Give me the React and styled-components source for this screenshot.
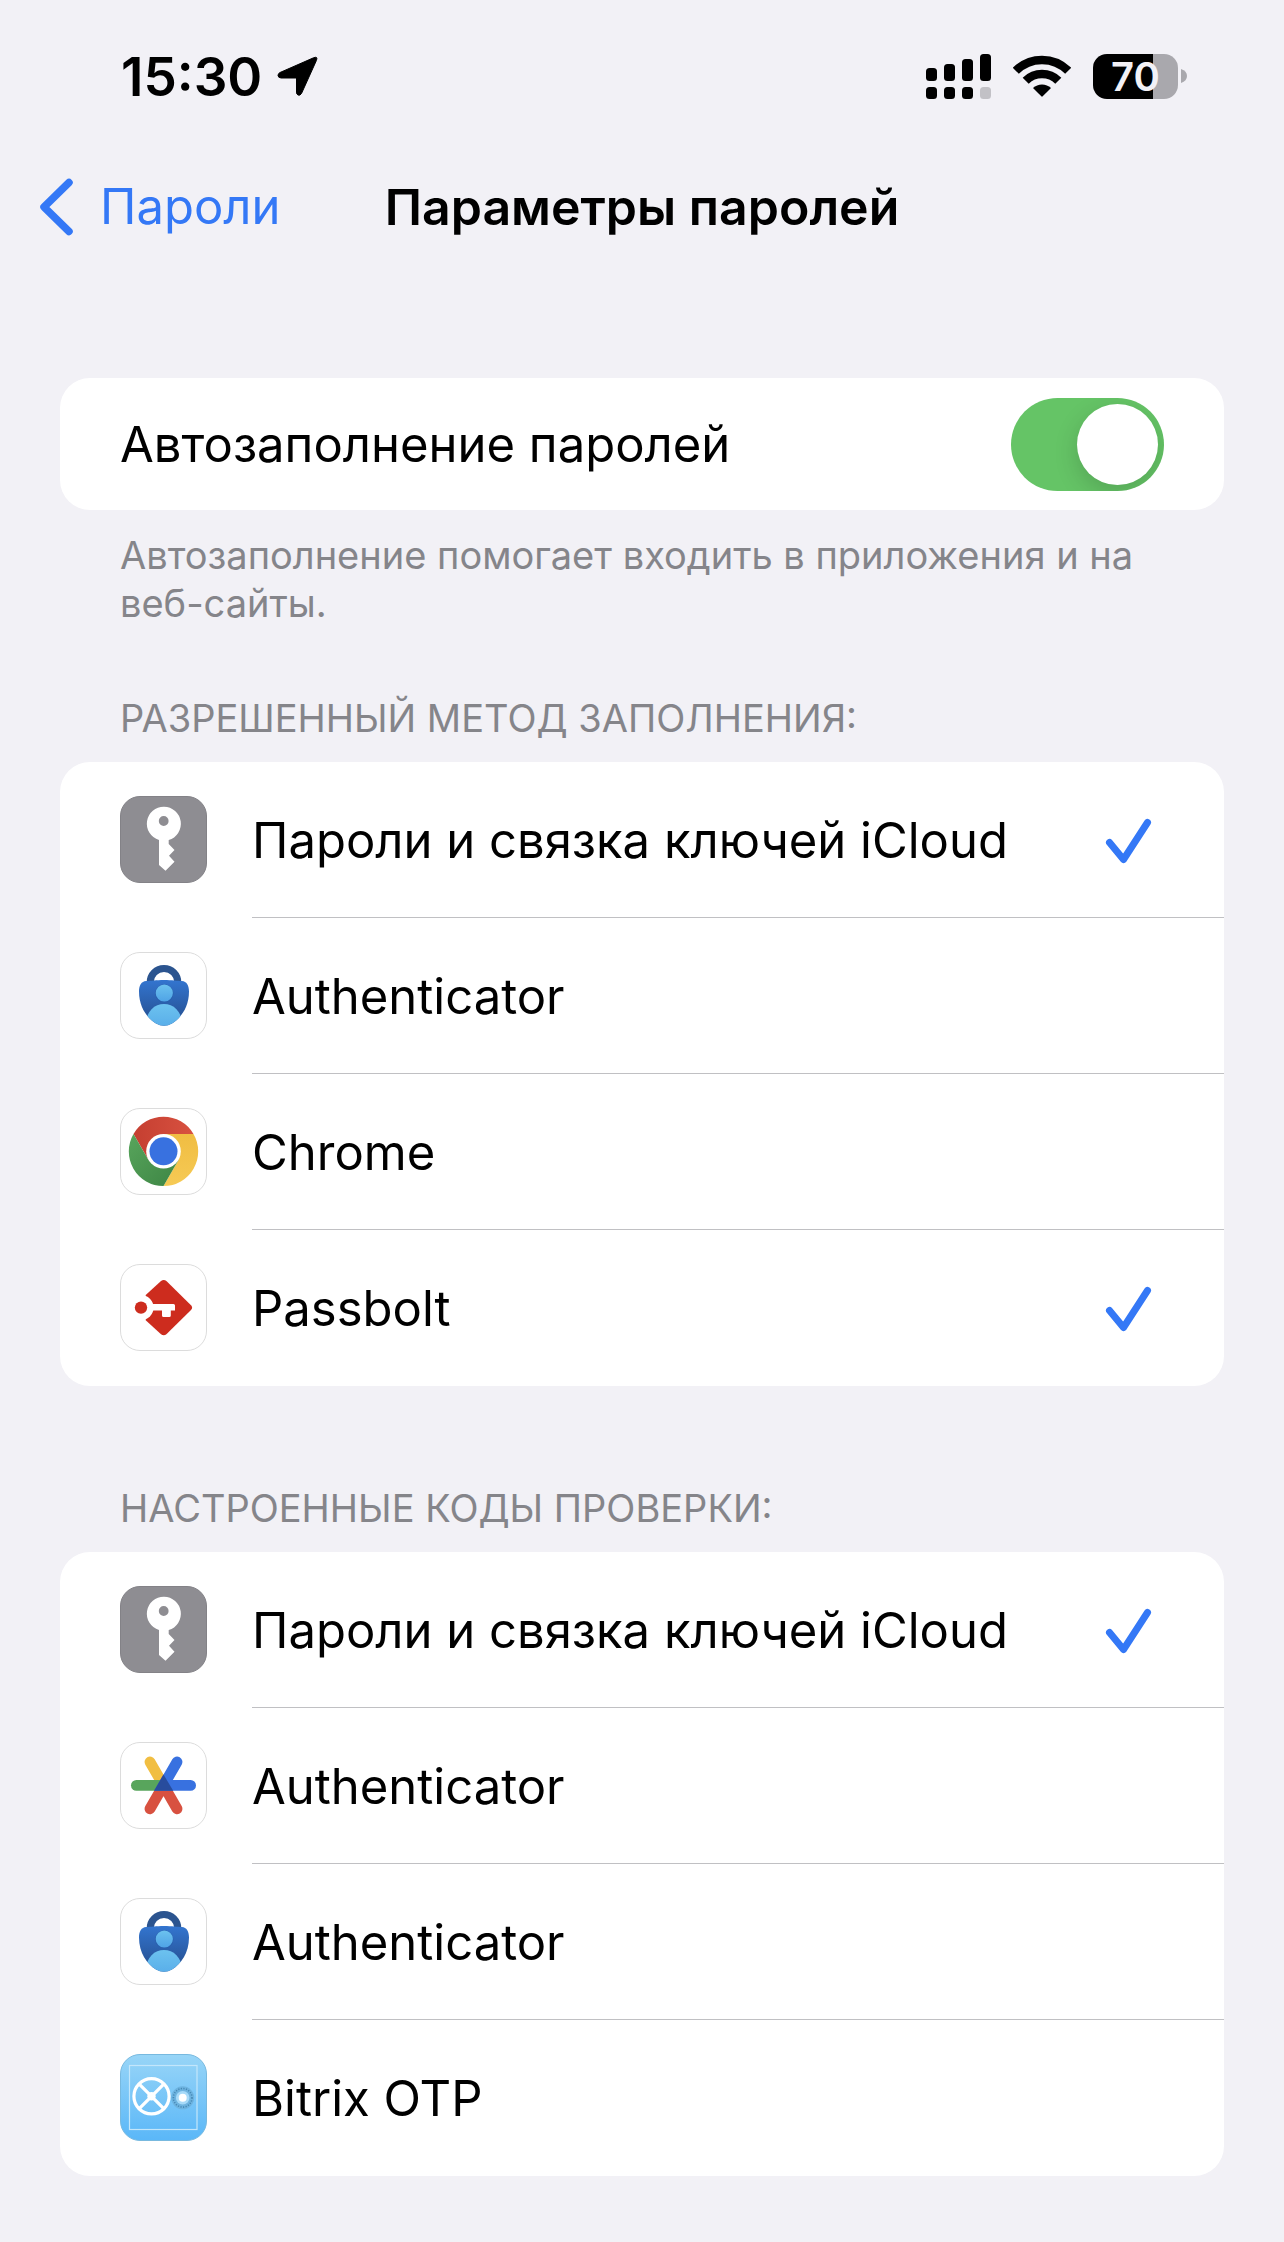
import React, { useState } from "react";
import styled, { createGlobalStyle } from "styled-components";

const GlobalStyle = createGlobalStyle`
  *, *::before, *::after { box-sizing: border-box; }
  body {
    margin: 0;
    background: #f2f1f6;
    color: #000;
    font-family: Inter, "Liberation Sans", sans-serif;
    font-size: 49px;
    line-height: 60px;
  }
`;

const Screen = styled.div`
  padding-bottom: 64px;
`;

const StatusBar = styled.header`
  display: flex;
  align-items: center;
  justify-content: space-between;
  height: 152px;
  padding: 0 97px 0 121px;
`;

const StatusGroup = styled.div`
  display: flex;
  align-items: center;
  gap: ${(p) => p.$gap}px;
`;

const Time = styled.time`
  padding-top: 2px;
  font-size: 53px;
  font-weight: 600;
`;

const Battery = styled.div`
  display: flex;
  align-items: center;
  gap: 3px;
`;

const BatteryBody = styled.div`
  display: grid;
  place-items: center;
  width: 85px;
  height: 45px;
  border-radius: 14px;
  background: linear-gradient(to right, #000 ${(p) => p.$level}%, #a9a8ad ${(p) => p.$level}%);
  color: #f2f1f6;
  font-size: 40px;
  font-weight: 600;
  line-height: 45px;
`;

const NavBar = styled.nav`
  display: grid;
  grid-template-columns: 1fr auto 1fr;
  align-items: center;
  height: 110px;
  padding: 0 40px;
`;

const BackLink = styled.a`
  display: flex;
  align-items: center;
  gap: 26px;
  color: #3478f6;
  text-decoration: none;
`;

const Title = styled.h1`
  margin: 0;
  font-size: 50px;
  font-weight: 600;
`;

const Main = styled.main`
  padding: 116px 60px 0;
`;

const Section = styled.section`
  margin-top: ${(p) => p.$space || 0}px;
`;

const Card = styled.div`
  border-radius: 30px;
  background: #fff;
  overflow: hidden;
`;

const RowText = styled.span`
  padding-top: 2px;
`;

const SwitchRow = styled.label`
  display: flex;
  align-items: center;
  justify-content: space-between;
  height: 132px;
  padding: 0 60px;
`;

const Switch = styled.input`
  appearance: none;
  display: flex;
  justify-content: ${(p) => (p.checked ? "flex-end" : "flex-start")};
  width: 153px;
  height: 93px;
  margin: 0;
  padding: 6px;
  border-radius: 47px;
  background: ${(p) => (p.checked ? "#65c466" : "#e9e9ea")};
  overflow: hidden;

  &::before {
    content: "";
    width: 81px;
    height: 81px;
    border-radius: 50%;
    background: #fff;
    box-shadow: 0 8px 24px rgba(0, 0, 0, 0.16);
  }
`;

const Note = styled.p`
  margin: 0;
  padding: 21px 60px 0;
  color: #85858a;
  font-size: 38px;
  line-height: 48px;
`;

const Heading = styled.h2`
  margin: 0;
  padding: 0 60px 20px;
  color: #85858a;
  font-size: 38px;
  font-weight: 400;
  line-height: 48px;
  text-transform: uppercase;
`;

const Row = styled.label`
  display: flex;
  align-items: flex-start;
  gap: 45px;
  height: 156px;
  padding-left: 60px;
`;

const RowBody = styled.span`
  display: flex;
  flex: 1;
  align-items: center;
  justify-content: space-between;
  height: 156px;
  padding-right: 72px;
  border-bottom: 1px solid #c0c0c3;

  ${Row}:last-child & {
    border-bottom-color: transparent;
  }
`;

const CheckCell = styled.span`
  display: grid;
  width: 48px;
  height: 48px;

  > * { grid-area: 1 / 1; }
  > svg { visibility: hidden; pointer-events: none; }
  > input:checked + svg { visibility: visible; }
`;

const CheckInput = styled.input`
  appearance: none;
  width: 48px;
  height: 48px;
  margin: 0;
`;

const IconSvg = styled.svg`
  display: block;
  flex: none;
  width: 87px;
  height: 87px;
  margin-top: 34px;
`;

function Tile({ fill = "#fff", stroke = "#dcdcdc" }) {
  return <rect x="0.5" y="0.5" width="86" height="86" rx="19.5" fill={fill} stroke={stroke} />;
}

function KeyIcon() {
  return (
    <IconSvg viewBox="0 0 87 87" aria-hidden="true">
      <Tile fill="#8e8d92" stroke="#838287" />
      <path
        fill="#fff"
        fillRule="evenodd"
        d="M44 10.7a17 17 0 0 1 4.7 33.3v4l5.8 6-5.5 5.7 5.5 6-9 9L39 69V44A17 17 0 0 1 44 10.7Zm-.3 9.4a4.9 4.9 0 1 0 0 9.8a4.9 4.9 0 0 0 0-9.8Z"
      />
    </IconSvg>
  );
}

function ShieldIcon({ id }) {
  const body =
    "M44 28C52 28 57 29 62 29C66.500 29.500 69 33 69 39.500C69 55 61 66 52 71.500Q44 76 36 71.500C27 66 19 55 19 39.500C19 33 21.500 29.500 26 29C31 29 36 28 44 28Z";
  return (
    <IconSvg viewBox="0 0 87 87" aria-hidden="true">
      <defs>
        <linearGradient id={`${id}-body`} x1="0" y1="0" x2="0" y2="1">
          <stop offset="0" stopColor="#3375cf" />
          <stop offset="0.75" stopColor="#28569c" />
        </linearGradient>
        <linearGradient id={`${id}-user`} x1="0" y1="0" x2="0" y2="1">
          <stop offset="0" stopColor="#6cc2ef" />
          <stop offset="1" stopColor="#4fa3e6" />
        </linearGradient>
        <clipPath id={`${id}-clip`}>
          <path d={body} />
        </clipPath>
      </defs>
      <Tile />
      <path d="M30.200 31V30.300a13.800 13.800 0 0 1 27.600 0V31" fill="none" stroke="#2b548f" strokeWidth="7" />
      <path d={body} fill={`url(#${id}-body)`} />
      <g clipPath={`url(#${id}-clip)`}>
        <circle cx="44.300" cy="41.500" r="9.200" fill="#2a60ad" />
        <circle cx="44.300" cy="41" r="8.600" fill={`url(#${id}-user)`} />
        <circle cx="44" cy="69.500" r="17.500" fill={`url(#${id}-user)`} />
      </g>
    </IconSvg>
  );
}

function ChromeIcon() {
  return (
    <IconSvg viewBox="0 0 87 87" aria-hidden="true">
      <defs>
        <linearGradient id="chrome-red">
          <stop offset="0" stopColor="#c53f31" />
          <stop offset="1" stopColor="#d85140" />
        </linearGradient>
        <linearGradient id="chrome-yellow" x1="0" y1="1" x2="0" y2="0">
          <stop offset="0" stopColor="#f6ca55" />
          <stop offset="1" stopColor="#f0bd42" />
        </linearGradient>
        <linearGradient id="chrome-green" x1="0" y1="0" x2="1" y2="1">
          <stop offset="0" stopColor="#58a55c" />
          <stop offset="1" stopColor="#3d8544" />
        </linearGradient>
      </defs>
      <Tile />
      <path fill="url(#chrome-red)" d="M13.500 26A34.600 34.600 0 0 1 73.500 26H43.500V43.300L28.500 52Z" />
      <path fill="url(#chrome-yellow)" d="M73.500 26A34.600 34.600 0 0 1 43.500 78L58.500 52L43.500 43.300V26Z" />
      <path fill="url(#chrome-green)" d="M43.500 78A34.600 34.600 0 0 1 13.500 26L28.500 52L43.500 43.300L58.500 52Z" />
      <circle cx="43.500" cy="43.300" r="17.300" fill="#fff" />
      <circle cx="43.500" cy="43.300" r="14" fill="#3871e0" />
    </IconSvg>
  );
}

function PassboltIcon() {
  return (
    <IconSvg viewBox="0 0 87 87" aria-hidden="true">
      <Tile />
      <path
        fill="#cd2c1e"
        d="M25.700 31L41 17Q43.700 15 46.400 17L71 41.200Q73.300 43.600 71 46L46.400 70.200Q43.700 72.300 41 70.200L25.700 56.200Z"
      />
      <circle cx="21" cy="43.600" r="12.600" fill="#fff" />
      <path fill="#fff" d="M30 40H53.500Q55 40 55 41.500V46.400H50.800V51.500Q50.800 53 49.300 53H43.500Q42 53 42 51.500V46.400H30Z" />
      <circle cx="21" cy="43.600" r="6.200" fill="#cd2c1e" />
    </IconSvg>
  );
}

function AsteriskIcon() {
  return (
    <IconSvg viewBox="0 0 87 87" aria-hidden="true">
      <Tile />
      <g fill="none" strokeWidth="10.800" strokeLinecap="round">
        <path stroke="#f1be42" d="M30 20L43.500 43.400" />
        <path stroke="#d85140" d="M30 66.800L43.500 43.400L57 66.800" />
        <path stroke="#58a55c" d="M16.400 43.400H40" />
        <path stroke="#3871e0" d="M57 20L43.500 43.400H70.600" />
      </g>
      <path fill="#284c9d" d="M43.500 32.500L53.200 48.800H34Z" />
    </IconSvg>
  );
}

function SafeIcon() {
  return (
    <IconSvg viewBox="0 0 87 87" aria-hidden="true">
      <defs>
        <linearGradient id="safe" x1="0" y1="0" x2="0" y2="1">
          <stop offset="0" stopColor="#98d5f7" />
          <stop offset="1" stopColor="#5ab7f8" />
        </linearGradient>
      </defs>
      <Tile fill="url(#safe)" stroke="#78b9df" />
      <rect x="9.500" y="11.500" width="67.500" height="64" fill="none" stroke="#c3e6fb" strokeWidth="1.200" />
      <g fill="none" stroke="#fff" strokeWidth="3.200">
        <circle cx="31.500" cy="42.300" r="17.600" />
        <path d="M19.500 30.300L43.500 54.300M43.500 30.300L19.500 54.300" />
      </g>
      <circle cx="31.500" cy="42.300" r="4.200" fill="#fff" />
      <circle cx="62.700" cy="43.800" r="11.500" fill="#6db3df" />
      <circle cx="62.700" cy="43.800" r="9.300" fill="none" stroke="#4688b5" strokeWidth="1.600" strokeDasharray="1.200 1.400" />
      <circle cx="62.700" cy="43.800" r="6.800" fill="#a6daf9" />
      <circle cx="62.700" cy="43.800" r="4" fill="#fff" />
    </IconSvg>
  );
}

function LocationArrow() {
  return (
    <svg width="42" height="42" viewBox="0 0 42 42" aria-hidden="true">
      <path
        d="M3 17.500L36.500 2.800Q41.200 1 39.400 5.500L24.500 38.500Q23 41 21 40Q19.500 39.500 19.500 37V23H4Q1 22.500 1 20.500Q1 18.500 3 17.500Z"
        stroke="#000"
        strokeLinejoin="round"
      />
    </svg>
  );
}

function SignalIcon() {
  const tops = [14, 10, 5, 0];
  return (
    <svg width="65" height="45" viewBox="0 0 65 45" aria-hidden="true">
      {tops.map((top, i) => (
        <g key={top}>
          <rect x={i * 18} y={top} width="11" height={27 - top} rx="3.500" />
          <rect x={i * 18} y="33" width="11" height="12" rx="3.500" fill={i === 3 ? "#c2c1c6" : "#000"} />
        </g>
      ))}
    </svg>
  );
}

function WifiIcon() {
  return (
    <svg width="58" height="42" viewBox="0 0 58 42" aria-hidden="true">
      <g fill="none" stroke="#000" strokeWidth="8.600">
        <path d="M2.800 15.800A37 37 0 0 1 55.200 15.800" />
        <path d="M12.700 25.700A23.200 23.200 0 0 1 45.300 25.700" />
      </g>
      <path d="M20 33A13 13 0 0 1 38 33L29.700 41.300Q29 42 28.300 41.300Z" />
    </svg>
  );
}

function Chevron() {
  return (
    <svg width="34" height="58" viewBox="0 0 34 58" aria-hidden="true">
      <path d="M29 4.500L4 29L29 53.500" fill="none" stroke="#3478f6" strokeWidth="7.500" strokeLinecap="round" strokeLinejoin="round" />
    </svg>
  );
}

function CheckMark() {
  return (
    <svg width="48" height="48" viewBox="0 0 48 48" aria-hidden="true">
      <path d="M5.500 26.500L19.500 43.500L43.500 6.500" fill="none" stroke="#3478f6" strokeWidth="7" strokeLinecap="round" strokeLinejoin="round" />
    </svg>
  );
}

const fillMethods = [
  { id: "fill-icloud", name: "Пароли и связка ключей iCloud", icon: <KeyIcon />, on: true },
  { id: "fill-ms", name: "Authenticator", icon: <ShieldIcon id="fill-shield" /> },
  { id: "fill-chrome", name: "Chrome", icon: <ChromeIcon /> },
  { id: "fill-passbolt", name: "Passbolt", icon: <PassboltIcon />, on: true },
];

const codeProviders = [
  { id: "code-icloud", name: "Пароли и связка ключей iCloud", icon: <KeyIcon />, on: true },
  { id: "code-google", name: "Authenticator", icon: <AsteriskIcon /> },
  { id: "code-ms", name: "Authenticator", icon: <ShieldIcon id="code-shield" /> },
  { id: "code-bitrix", name: "Bitrix OTP", icon: <SafeIcon /> },
];

function OptionList({ items }) {
  return (
    <Card>
      {items.map((item) => (
        <Row key={item.id} htmlFor={item.id}>
          {item.icon}
          <RowBody>
            <RowText>{item.name}</RowText>
            <CheckCell>
              <CheckInput type="checkbox" id={item.id} defaultChecked={Boolean(item.on)} />
              <CheckMark />
            </CheckCell>
          </RowBody>
        </Row>
      ))}
    </Card>
  );
}

export default function App() {
  const [autofill, setAutofill] = useState(true);
  return (
    <Screen>
      <GlobalStyle />
      <StatusBar>
        <StatusGroup $gap={15}>
          <Time>15:30</Time>
          <LocationArrow />
        </StatusGroup>
        <StatusGroup $gap={22}>
          <SignalIcon />
          <WifiIcon />
          <Battery>
            <BatteryBody $level={71}>70</BatteryBody>
            <svg width="6" height="14" viewBox="0 0 6 14" aria-hidden="true">
              <path d="M0 0Q6 2 6 7Q6 12 0 14Z" fill="#a9a8ad" />
            </svg>
          </Battery>
        </StatusGroup>
      </StatusBar>
      <NavBar>
        <BackLink href="#passwords">
          <Chevron />
          Пароли
        </BackLink>
        <Title>Параметры паролей</Title>
      </NavBar>
      <Main>
        <Section>
          <Card>
            <SwitchRow htmlFor="autofill">
              <RowText>Автозаполнение паролей</RowText>
              <Switch
                id="autofill"
                type="checkbox"
                role="switch"
                checked={autofill}
                onChange={(e) => setAutofill(e.target.checked)}
              />
            </SwitchRow>
          </Card>
          <Note>Автозаполнение помогает входить в приложения и на веб-сайты.</Note>
        </Section>
        <Section $space={67}>
          <Heading>Разрешенный метод заполнения:</Heading>
          <OptionList items={fillMethods} />
        </Section>
        <Section $space={98}>
          <Heading>Настроенные коды проверки:</Heading>
          <OptionList items={codeProviders} />
        </Section>
      </Main>
    </Screen>
  );
}
